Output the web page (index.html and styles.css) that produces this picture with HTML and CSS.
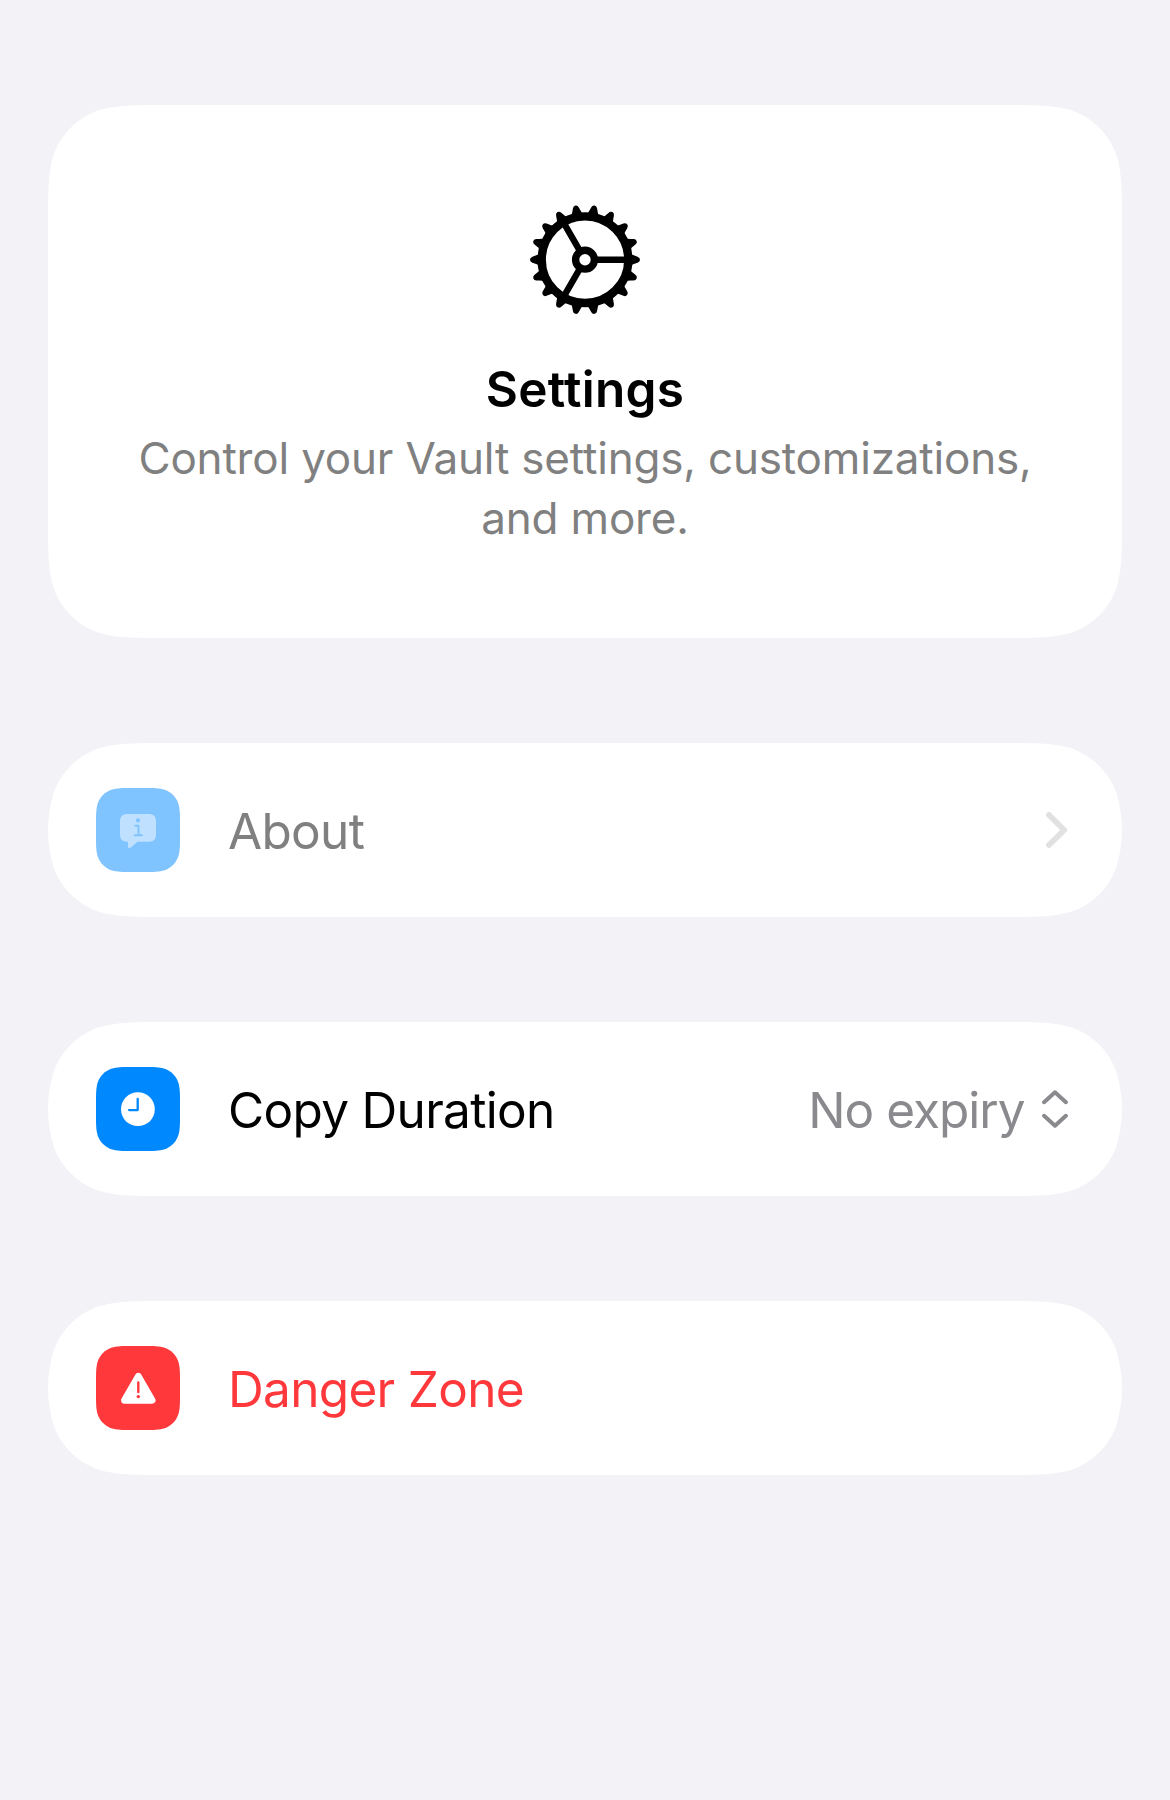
FILE: index.html
```html
<!DOCTYPE html>
<html lang="en">
<head>
<meta charset="utf-8">
<title>Settings</title>
<link rel="stylesheet" href="styles.css">
</head>
<body>
<main class="page">
  <section class="card hero">
    <svg class="gear" width="110" height="110" viewBox="-55 -54.7 110 110">
      <defs><path id="t" d="M45,-6.2 Q47.5,-4.6 52.6,-3 Q55,-2.200 55,0 Q55,2.200 52.6,3 Q47.5,4.6 45,6.2Z"/></defs>
      <g>
        <use href="#t"/><use href="#t" transform="rotate(20)"/><use href="#t" transform="rotate(40)"/>
        <use href="#t" transform="rotate(60)"/><use href="#t" transform="rotate(80)"/><use href="#t" transform="rotate(100)"/>
        <use href="#t" transform="rotate(120)"/><use href="#t" transform="rotate(140)"/><use href="#t" transform="rotate(160)"/>
        <use href="#t" transform="rotate(180)"/><use href="#t" transform="rotate(200)"/><use href="#t" transform="rotate(220)"/>
        <use href="#t" transform="rotate(240)"/><use href="#t" transform="rotate(260)"/><use href="#t" transform="rotate(280)"/>
        <use href="#t" transform="rotate(300)"/><use href="#t" transform="rotate(320)"/><use href="#t" transform="rotate(340)"/>
      </g>
      <g fill="none" stroke="#000">
        <circle r="43.3" stroke-width="8.4"/>
        <circle r="9.4" stroke-width="7.4"/>
        <path stroke-width="6.4" d="M12,0H42M-6,-10.39L-21,-36.37M-6,10.39L-21,36.37"/>
      </g>
    </svg>
    <h1 class="title">Settings</h1>
    <p class="description">Control your Vault settings, customizations,<br>and more.</p>
  </section>

  <section class="card row">
    <svg class="tile about-tile" width="84" height="84" viewBox="0 0 84 84">
      <path fill="#bfe1ff" d="M31,26H53Q60,26 60,33V46.700Q60,53.700 53,53.700H41.500L34.800,59.500Q32.200,61 32,58.500V53.700H31Q24,53.700 24,46.700V33Q24,26 31,26Z"/>
      <circle cx="42" cy="32.300" r="2.100" fill="#80c4ff"/>
      <path d="M39.300,37.700H42.500V47.300M38.800,47.300H46" fill="none" stroke="#80c4ff" stroke-width="1.900" stroke-linecap="round" stroke-linejoin="round"/>
    </svg>
    <span class="label muted">About</span>
    <svg class="chevron" width="22" height="36" viewBox="0 0 22 36">
      <path d="M3,3L18.200,18L3,33" fill="none" stroke="#e1e1e1" stroke-width="5.800" stroke-linecap="round" stroke-linejoin="round"/>
    </svg>
  </section>

  <section class="card row">
    <svg class="tile copy-tile" width="84" height="84" viewBox="0 0 84 84">
      <circle cx="41.900" cy="42.200" r="16.900" fill="#fff"/>
      <path d="M41.700,31.900V43.100H33.100" fill="none" stroke="#08f" stroke-width="2.300" stroke-linecap="round" stroke-linejoin="round"/>
    </svg>
    <span class="label">Copy Duration</span>
    <span class="value">No expiry</span>
    <svg class="updown" width="26" height="38" viewBox="0 0 26 38">
      <path d="M2.100,12.200L13,2.300L23.900,12.200M2.100,25.800L13,35.700L23.900,25.800" fill="none" stroke="#8a8a8e" stroke-width="4" stroke-linecap="round" stroke-linejoin="round"/>
    </svg>
  </section>

  <section class="card row">
    <svg class="tile danger-tile" width="84" height="84" viewBox="0 0 84 84">
      <path d="M42.300,30.400L56,54.300H28.600Z" fill="#fff" stroke="#fff" stroke-width="7" stroke-linejoin="round"/>
      <path d="M42.300,36.500V46" stroke="#ff383c" stroke-width="2.400" stroke-linecap="round"/>
      <circle cx="42.300" cy="50.600" r="1.700" fill="#ff383c"/>
    </svg>
    <span class="label danger">Danger Zone</span>
  </section>
</main>
</body>
</html>
```
FILE: styles.css
```css
body {
  margin: 0;
  background: #f2f2f7;
  font-family: Inter, "Liberation Sans", sans-serif;
}

.page {
  display: flex;
  flex-direction: column;
  gap: 105px;
  padding: 105px 48px;
}

.card {
  box-sizing: border-box;
  width: 1074px;
  background: #fff;
}

.hero {
  display: flex;
  flex-direction: column;
  align-items: center;
  height: 533px;
  padding-top: 100px;
  clip-path: path("M119.2,0 H954.8 C989.1,0 1006.3,0 1024.7,5.8 C1044.9,13.2 1060.8,29.1 1068.2,49.3 C1074,67.7 1074,84.9 1074,119.2 V413.800 C1074,448.1 1074,465.3 1068.2,483.7 C1060.8,503.9 1044.9,519.8 1024.7,527.2 C1006.3,533 989.1,533 954.8,533 H119.2 C84.9,533 67.7,533 49.3,527.2 C29.1,519.8 13.2,503.9 5.8,483.7 C0,465.3 0,448.1 0,413.8 V119.2 C0,84.9 0,67.7 5.8,49.3 C13.2,29.1 29.1,13.2 49.3,5.8 C67.7,0 84.9,0 119.2,0 Z");
}

.title {
  margin: 44px 0 0;
  font-size: 49.5px;
  font-weight: 600;
  letter-spacing: 0.3px;
  line-height: 60px;
}

.description {
  margin: 9px 0 0;
  color: #808080;
  font-size: 44px;
  letter-spacing: -0.18px;
  line-height: 60px;
  text-align: center;
  white-space: nowrap;
}

.row {
  display: flex;
  align-items: center;
  height: 174px;
  padding: 0 54px 0 48px;
  clip-path: path("M119.2,0 H954.8 C989.1,0 1006.3,0 1024.7,5.8 C1044.9,13.2 1060.8,29.1 1068.2,49.3 C1071.8,61 1074,74 1074,87 C1074,100 1071.8,113 1068.2,124.7 C1060.8,144.9 1044.9,160.8 1024.7,168.2 C1006.3,174 989.1,174 954.8,174 H119.2 C84.9,174 67.7,174 49.3,168.2 C29.1,160.8 13.2,144.9 5.8,124.7 C2.2,113 0,100 0,87 C0,74 2.2,61 5.8,49.3 C13.2,29.1 29.1,13.2 49.3,5.8 C67.7,0 84.9,0 119.2,0 Z");
}

.tile {
  flex: none;
  margin-right: 48px;
  clip-path: path("M36.7,0 H47.3 C57.9,0 63.2,0 68.8,1.8 C75.1,4.1 79.9,8.9 82.2,15.2 C84,20.8 84,26.1 84,36.7 V47.3 C84,57.9 84,63.2 82.2,68.8 C79.9,75.1 75.1,79.9 68.8,82.2 C63.2,84 57.9,84 47.3,84 H36.7 C26.1,84 20.8,84 15.2,82.2 C8.9,79.9 4.1,75.1 1.8,68.8 C0,63.2 0,57.9 0,47.3 V36.7 C0,26.1 0,20.8 1.8,15.2 C4.1,8.9 8.9,4.1 15.2,1.8 C20.8,0 26.1,0 36.7,0 Z");
}

.about-tile { background: #80c4ff; }
.copy-tile { background: #08f; }
.danger-tile { background: #ff383c; }

.label,
.value {
  padding-top: 2px;
  font-size: 49.5px;
  letter-spacing: -0.68px;
  line-height: 60px;
  white-space: nowrap;
}

.muted { color: #808080; }
.danger { color: #ff383c; }

.value {
  margin-left: auto;
  color: #8a8a8e;
  letter-spacing: -1px;
}

.chevron {
  margin-left: auto;
}

.updown {
  margin-left: 17.5px;
}
```
